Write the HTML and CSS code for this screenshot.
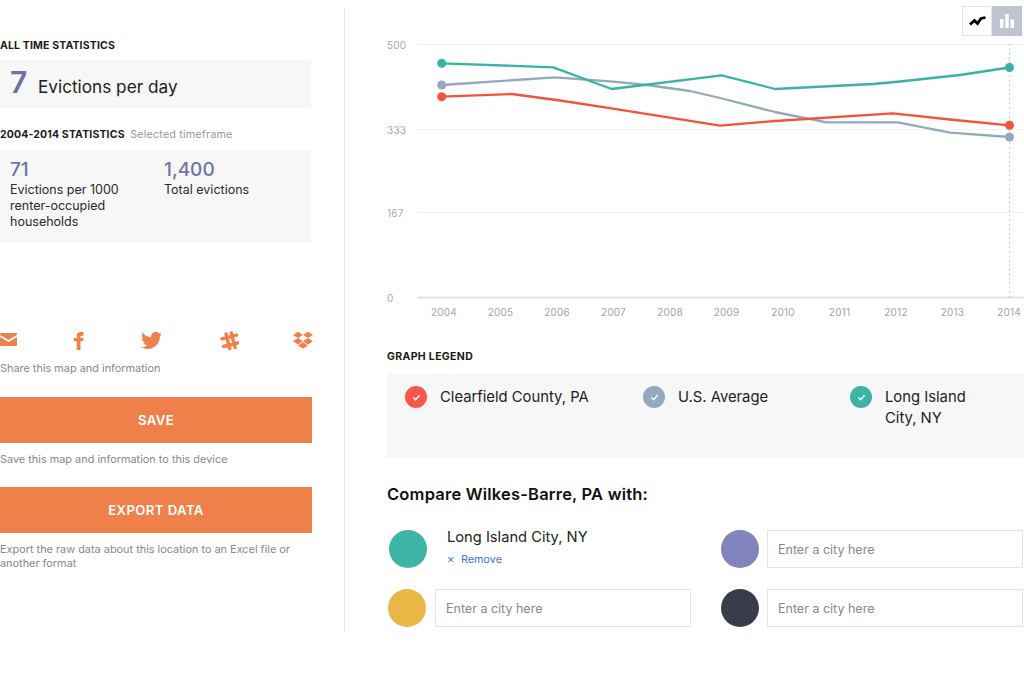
FILE: index.html
```html
<!DOCTYPE html>
<html lang="en">
<head>
<meta charset="utf-8">
<title>Eviction statistics</title>
<link rel="stylesheet" href="styles.css">
</head>
<body>
<main class="page">
  <aside class="side">
    <h2 class="label first">ALL TIME STATISTICS</h2>
    <div class="panel day">
      <span class="big">7</span>
      <span class="day-text">Evictions per day</span>
    </div>
    <h2 class="label second">2004-2014 STATISTICS <span class="label-note">Selected timeframe</span></h2>
    <div class="panel stats">
      <div class="stat">
        <div class="num">71</div>
        <div class="stat-text">Evictions per 1000<br>renter-occupied<br>households</div>
      </div>
      <div class="stat">
        <div class="num">1,400</div>
        <div class="stat-text">Total evictions</div>
      </div>
    </div>
    <div class="share">
      <svg class="ic mail" viewBox="0 0 17 13"><path d="M1 0h15a1 1 0 0 1 1 1v1L8.500 7 0 2V1a1 1 0 0 1 1-1zM0 4l8.500 5L17 4v8a1 1 0 0 1-1 1H1a1 1 0 0 1-1-1z"/></svg>
      <svg class="ic fb" viewBox="4 0 16 24"><path d="M9 8H5v4h4v12h5V12h3.642L18 8h-4V6.333C14 5.378 14.192 5 15.115 5H18V0h-3.808C10.596 0 9 1.583 9 4.615V8z"/></svg>
      <svg class="ic tw" viewBox="0 0 24 24"><path d="M23.953 4.570a10 10 0 0 1-2.825.775 4.958 4.958 0 0 0 2.163-2.723c-.951.555-2.005.959-3.127 1.184a4.920 4.920 0 0 0-8.384 4.482C7.690 8.095 4.067 6.130 1.640 3.162a4.822 4.822 0 0 0-.666 2.475c0 1.710.870 3.213 2.188 4.096a4.904 4.904 0 0 1-2.228-.616v.060a4.923 4.923 0 0 0 3.946 4.827 4.996 4.996 0 0 1-2.212.085 4.936 4.936 0 0 0 4.604 3.417 9.867 9.867 0 0 1-6.102 2.105c-.390 0-.779-.023-1.170-.067a13.995 13.995 0 0 0 7.557 2.209c9.053 0 13.998-7.496 13.998-13.985 0-.210 0-.420-.015-.630A9.935 9.935 0 0 0 24 4.590z"/></svg>
      <svg class="ic sl" viewBox="0 0 20 20"><g class="hash"><path d="M7 3l3.700 14.500M12.300 2l3.700 14.500M3 7.800l14.500-3.700M4.500 15.500L19 11.800"/></g></svg>
      <svg class="ic db" viewBox="0 1 24 21.500"><path d="M6 1.807L0 5.629l6 3.822 6.001-3.822L6 1.807zM18 1.807l-6 3.822 6 3.822 6-3.822-6-3.822zM0 13.274l6 3.822 6.001-3.822L6 9.452l-6 3.822zM18 9.452l-6 3.822 6 3.822 6-3.822-6-3.822zM6 18.371l6.001 3.822 6-3.822-6-3.822L6 18.371z"/></svg>
    </div>
    <p class="note share-note">Share this map and information</p>
    <button class="btn">SAVE</button>
    <p class="note">Save this map and information to this device</p>
    <button class="btn export">EXPORT DATA</button>
    <p class="note">Export the raw data about this location to an Excel file or another format</p>
  </aside>
  <section class="main">
    <div class="toggle">
      <span class="tg tg-line"><svg viewBox="0 0 17 10" class="tg-ic"><path d="M1 8.500l4.500-4 3 3L12 2.500l4.500-1"/></svg></span>
      <span class="tg tg-bar"><svg viewBox="0 0 14 14" class="tg-ic"><rect x="0" y="5" width="3.500" height="9"/><rect x="5.200" y="0" width="3.500" height="14"/><rect x="10.500" y="5.500" width="3.500" height="8.500"/></svg></span>
    </div>
    <svg class="chart" viewBox="387 36 637 294">
      <g class="grid">
        <line x1="417" y1="44.500" x2="1024" y2="44.500"/>
        <line x1="417" y1="129.500" x2="1024" y2="129.500"/>
        <line x1="417" y1="212.500" x2="1024" y2="212.500"/>
      </g>
      <line class="axis" x1="417" y1="297.500" x2="1024" y2="297.500"/>
      <line class="cursor" x1="1009.500" y1="44" x2="1009.500" y2="297"/>
      <g class="ylab">
        <text x="387" y="49">500</text>
        <text x="387" y="134">333</text>
        <text x="387" y="217">167</text>
        <text x="387" y="302">0</text>
      </g>
      <g class="xlab">
        <text x="444" y="316">2004</text>
        <text x="500.500" y="316">2005</text>
        <text x="557" y="316">2006</text>
        <text x="613.500" y="316">2007</text>
        <text x="670" y="316">2008</text>
        <text x="726.500" y="316">2009</text>
        <text x="783" y="316">2010</text>
        <text x="839.500" y="316">2011</text>
        <text x="896" y="316">2012</text>
        <text x="952.500" y="316">2013</text>
        <text x="1009" y="316">2014</text>
      </g>
      <polyline class="s gray" points="441.700,85 555,77.300 613,81.700 647,85 690,91 720,98 775,112 826.700,122.300 898,122.300 950,132.700 1009.500,137"/>
      <polyline class="s red" points="441.700,96.700 511.700,94 560,100.500 613,108.700 720,125.700 775,121 893,113.300 950,119.500 1009.500,125.300"/>
      <polyline class="s teal" points="441.700,63.300 553.300,67.300 611.700,89 721.700,75.300 775,89 873,84 900,81.500 960,75 1009.500,67.500"/>
      <circle class="d-gray" cx="441.700" cy="85" r="4.500"/>
      <circle class="d-red" cx="441.700" cy="96.700" r="4.500"/>
      <circle class="d-teal" cx="441.700" cy="63.300" r="4.500"/>
      <circle class="d-gray" cx="1009.500" cy="137" r="4.500"/>
      <circle class="d-red" cx="1009.500" cy="125.300" r="4.500"/>
      <circle class="d-teal" cx="1009.500" cy="67.500" r="4.500"/>
    </svg>
    <h2 class="label legend-label">GRAPH LEGEND</h2>
    <div class="legend">
      <div class="leg leg-a"><span class="chk c-red"><svg viewBox="0 0 10 8"><path d="M1.500 4l2.500 2.500 4.500-5"/></svg></span><span class="leg-text">Clearfield County, PA</span></div>
      <div class="leg leg-b"><span class="chk c-gray"><svg viewBox="0 0 10 8"><path d="M1.500 4l2.500 2.500 4.500-5"/></svg></span><span class="leg-text">U.S. Average</span></div>
      <div class="leg leg-c"><span class="chk c-teal"><svg viewBox="0 0 10 8"><path d="M1.500 4l2.500 2.500 4.500-5"/></svg></span><span class="leg-text">Long Island<br>City, NY</span></div>
    </div>
    <h2 class="compare-title">Compare Wilkes-Barre, PA with:</h2>
    <div class="compare">
      <div class="row">
        <span class="dot dot-first teal-bg"></span>
        <div class="chosen">
          <div class="chosen-name">Long Island City, NY</div>
          <a class="remove" href="#"><span class="x">✕</span>Remove</a>
        </div>
      </div>
      <div class="row">
        <span class="dot purple-bg"></span>
        <input class="city" type="text" placeholder="Enter a city here">
      </div>
      <div class="row">
        <span class="dot dot-wide yellow-bg"></span>
        <input class="city" type="text" placeholder="Enter a city here">
      </div>
      <div class="row">
        <span class="dot dark-bg"></span>
        <input class="city" type="text" placeholder="Enter a city here">
      </div>
    </div>
  </section>
</main>
</body>
</html>
```
FILE: styles.css
```css
* { box-sizing: border-box; }
html, body { margin: 0; padding: 0; background: #fff; }
body { font-family: "Inter", "Liberation Sans", sans-serif; color: #1c1c1e; height: 689px; overflow: hidden; }
.page { display: flex; align-items: flex-start; padding-top: 8px; }
.side { width: 345px; height: 624px; border-right: 1px solid #e8e8e8; padding-right: 33px; flex: none; }
.main { flex: 1; min-width: 0; padding-left: 42px; }
.label { margin: 0; font-size: 10.500px; line-height: 14px; font-weight: 700; color: #1a1a1a; letter-spacing: .15px; }
.first { margin-top: 31px; }
.second { margin-top: 20px; }
.label-note { font-weight: 400; color: #999; margin-left: 3px; font-size: 10.800px; }
.panel { background: #f7f7f7; }
.day { margin-top: 7px; height: 48px; display: flex; align-items: center; padding-left: 10px; }
.big { font-size: 30px; font-weight: 600; color: #6f71a6; width: 28px; margin-top: -4px; }
.day-text { font-size: 17.200px; color: #222; margin-top: 4px; }
.stats { margin-top: 8px; height: 93px; display: flex; padding: 10px 10px 0; }
.stat { width: 154px; flex: none; }
.num { font-size: 19px; line-height: 20px; font-weight: 500; color: #6f73a8; }
.stat-text { font-size: 12.500px; line-height: 16px; color: #2a2a2a; margin-top: 2px; }
.share { margin-top: 89px; height: 20px; display: block; position: relative; }
.ic { fill: #f0804a; position: absolute; }
.mail { left: 0; top: 1px; width: 17px; height: 13px; }
.fb { left: 73px; top: 0; width: 12px; height: 18px; }
.tw { left: 141px; top: -2px; width: 21px; height: 21px; }
.sl { left: 219px; top: -1px; width: 20px; height: 20px; }
.hash { fill: none; stroke: #f0804a; stroke-width: 3.400; stroke-linecap: round; }
.db { left: 293px; top: -1px; width: 20px; height: 18px; }
.note { margin: 0; font-size: 10.900px; line-height: 14px; color: #888; }
.share-note { margin-top: 9px; }
.btn { display: block; width: 312px; height: 46px; border: 0; padding: 0; background: #f0804a; color: #fff; font-family: inherit; font-size: 13.200px; font-weight: 600; letter-spacing: .4px; margin-top: 22px; margin-bottom: 9px; }
.export { margin-top: 21px; margin-bottom: 9px; }
.toggle { display: flex; justify-content: flex-end; padding-right: 2px; margin-top: -2px; height: 30px; }
.tg { width: 30px; height: 30px; display: flex; align-items: center; justify-content: center; }
.tg-line { background: #fff; border: 1px solid #e4e4e8; }
.tg-bar { background: #c0c3d0; }
.tg-line .tg-ic { width: 17px; height: 10px; fill: none; stroke: #000; stroke-width: 2.800; }
.tg-bar .tg-ic { width: 14px; height: 14px; fill: #fff; }
.chart { display: block; width: 637px; height: 294px; }
.grid line { stroke: #f1f1f1; stroke-width: 1; }
.axis { stroke: #dcdce4; stroke-width: 1.500; }
.cursor { stroke: #bbb; stroke-width: 1; stroke-dasharray: 1.500 3; }
.ylab text { font-size: 10px; fill: #a8a8a8; letter-spacing: .2px; }
.xlab text { font-size: 10px; fill: #a4a4a4; text-anchor: middle; letter-spacing: .2px; }
.s { fill: none; stroke-width: 2.300; stroke-linejoin: round; }
.gray { stroke: #94a9bd; }
.red { stroke: #f4533b; }
.teal { stroke: #39b3a3; }
.d-gray { fill: #94a9bd; }
.d-red { fill: #f4533b; }
.d-teal { fill: #39b3a3; }
.legend-label { margin-top: 20px; letter-spacing: .35px; }
.legend { margin-top: 9px; height: 85px; background: #f7f7f7; position: relative; display: flex; padding: 13px 0 0 18px; }
.leg { display: flex; align-items: flex-start; flex: none; }
.leg-a { width: 238px; }
.leg-b { width: 207px; }
.chk { width: 22px; height: 22px; border-radius: 50%; display: flex; align-items: center; justify-content: center; flex: none; }
.chk svg { width: 9px; height: 7px; fill: none; stroke: #fff; stroke-width: 1.600; }
.c-red { background: #f9574c; }
.c-gray { background: #94a9bd; }
.c-teal { background: #3eb4a5; }
.leg-text { font-size: 14.800px; line-height: 21px; margin-left: 13px; margin-top: 1px; color: #222; }
.compare-title { margin: 26px 0 0; font-size: 16.500px; line-height: 20px; font-weight: 600; color: #111; letter-spacing: .2px; }
.compare { margin-top: 26px; display: grid; grid-template-columns: 333px 303px; row-gap: 21px; }
.row { display: flex; align-items: center; height: 38px; }
.dot { width: 38px; height: 38px; border-radius: 50%; flex: none; margin-right: 8px; margin-left: 1px; }
.dot-first { margin-left: 2px; }
.dot-wide { margin-right: 9px; }
.teal-bg { background: #3eb4a5; }
.purple-bg { background: #8184bd; }
.yellow-bg { background: #e9b746; }
.dark-bg { background: #383d4c; }
.chosen { margin-left: 12px; margin-top: -5px; }
.chosen-name { font-size: 14.700px; line-height: 20px; color: #222; }
.remove { display: block; font-size: 10.800px; line-height: 14px; color: #3f72d8; text-decoration: none; margin-top: 6px; }
.x { display: inline-block; width: 14px; font-size: 9px; }
.city { width: 256px; height: 38px; border: 1px solid #e4e4e4; background: #fff; padding: 0 10px; font-family: inherit; font-size: 12.500px; margin: 0; }
.city::placeholder { color: #888; opacity: 1; }
```
